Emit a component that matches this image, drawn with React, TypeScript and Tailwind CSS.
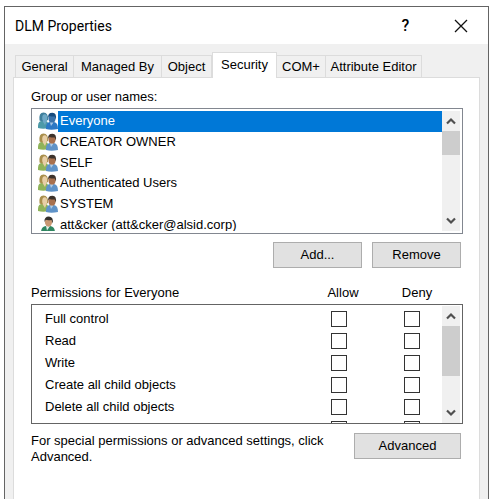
import type { ReactNode } from "react";

type Palette = { back: string; backHair: string; backSkin: string; front: string; hair: string; skin: string };

const normal: Palette = {
  back: "#8fb35a",
  backHair: "#a98f4c",
  backSkin: "#e8cfa6",
  front: "#5f93c8",
  hair: "#3d332c",
  skin: "#a8714f",
};

const selected: Palette = {
  back: "#4c9aa8",
  backHair: "#3f7f9c",
  backSkin: "#6fa9c6",
  front: "#2c78c4",
  hair: "#174b7e",
  skin: "#3a73ab",
};

function GroupIcon({ p }: { p: Palette }) {
  return (
    <svg viewBox="0 0 20 18" className="h-[18px] w-5 shrink-0" aria-hidden="true">
      <path d="M0 16 Q-0.500 9 4 9 H8 Q11 10 11 16 Q5 17.500 0 16Z" fill={p.back} />
      <path d="M1.500 8.500 Q0.500 0.500 5.500 0.500 Q10.500 0.500 10 8 L7 9.500 H4Z" fill={p.backHair} />
      <ellipse cx="6.700" cy="6" rx="2.500" ry="3.800" fill={p.backSkin} />
      <path d="M4.500 9 L7 13 L8.500 9Z" fill={p.backSkin} />
      <path d="M8 17 Q7.500 10.500 12 10 H16 Q20 10.500 20 17 Q13 18.500 8 17Z" fill={p.front} />
      <ellipse cx="14" cy="6.500" rx="3.600" ry="4.600" fill={p.skin} />
      <path d="M10.200 6 Q9.500 0.700 14.500 0.700 Q19 1 17.800 7.500 L16.800 4.500 Q13 4.500 11.300 4Z" fill={p.hair} />
      <path d="M12 10.500 L13 14 L15.500 10.500Z" fill="#d5e5f2" opacity="0.7" />
    </svg>
  );
}

function UserIcon() {
  return (
    <svg viewBox="0 0 20 18" className="h-[18px] w-5 shrink-0" aria-hidden="true">
      <path d="M3 16.500 Q3 10.500 8 10 H12 Q17 10.500 17 16.500 Q10 18.500 3 16.500Z" fill="#2f8560" />
      <path d="M8 10 L9 14.500 L12 10Z" fill="#e3efe8" />
      <ellipse cx="10.500" cy="6" rx="3.600" ry="4.700" fill="#c99873" />
      <path d="M6.500 6 Q6 0.500 11 0.500 Q16 1 14.500 7.500 L13.500 4 Q9.500 4.500 7.800 3.800Z" fill="#33302c" />
    </svg>
  );
}

function Chevron({ down }: { down?: boolean }) {
  return (
    <svg viewBox="0 0 10 8" className="h-2 w-[10px]" fill="none" stroke="#505050" strokeWidth="2.200" aria-hidden="true">
      <path d={down ? "M1 1.500 L5 5.500 L9 1.500" : "M1 6.500 L5 2.500 L9 6.500"} />
    </svg>
  );
}

function ScrollBar({ children }: { children: ReactNode }) {
  return (
    <div className="flex w-[18px] shrink-0 flex-col bg-[#f0f0f0]">
      <button type="button" aria-label="Scroll up" className="flex h-5 w-full shrink-0 items-center justify-center">
        <Chevron />
      </button>
      {children}
      <button type="button" aria-label="Scroll down" className="mt-auto flex h-5 w-full shrink-0 items-center justify-center">
        <Chevron down />
      </button>
    </div>
  );
}

function PushButton({ children, wide }: { children: ReactNode; wide?: boolean }) {
  return (
    <button
      type="button"
      className={`${wide ? "w-[107px]" : "w-[89px]"} h-[26px] shrink-0 border border-[#adadad] bg-[#e1e1e1] text-center`}
    >
      {children}
    </button>
  );
}

const tabs = [
  { name: "General", width: "w-[59px]" },
  { name: "Managed By", width: "w-[88px]" },
  { name: "Object", width: "w-[50px]" },
  { name: "Security", width: "w-[65px]" },
  { name: "COM+", width: "w-[49px]" },
  { name: "Attribute Editor", width: "w-[96px]" },
];

const principals = [
  "Everyone",
  "CREATOR OWNER",
  "SELF",
  "Authenticated Users",
  "SYSTEM",
  "att&cker (att&cker@alsid.corp)",
];

const permissions = ["Full control", "Read", "Write", "Create all child objects", "Delete all child objects", ""];

const box = "block size-4 appearance-none border border-[#333333] bg-white";

export default function App() {
  return (
    <div className="flex h-screen flex-col overflow-hidden bg-white pt-[6px] pr-[3px] pl-1 font-['Liberation_Sans',Arial,sans-serif] text-[13px] leading-4 text-black">
      <main className="flex min-h-0 flex-1 flex-col border-x border-t border-[#646464] bg-[#f0f0f0]">
        <header className="flex h-[37px] shrink-0 items-center bg-white pl-[10px] font-[Roboto,sans-serif]">
          <h1 className="flex-1 text-sm">DLM Properties</h1>
          <button type="button" aria-label="Help" className="w-[55px] text-center text-base font-medium">
            ?
          </button>
          <button type="button" aria-label="Close" className="flex w-[55px] justify-center">
            <svg viewBox="0 0 14 14" className="size-[14px]" stroke="#111" strokeWidth="1.300" aria-hidden="true">
              <path d="M1 1 L13 13 M13 1 L1 13" />
            </svg>
          </button>
        </header>

        <div className="flex min-h-0 flex-1 flex-col px-2 pt-2">
          <div role="tablist" className="relative flex h-[25px] shrink-0 items-end pl-[2px]">
            {tabs.map((t) =>
              t.name === "Security" ? (
                <button
                  key={t.name}
                  type="button"
                  role="tab"
                  aria-selected
                  className={`${t.width} -mb-px h-[26px] border-x border-t border-[#dcdcdc] bg-white pb-px text-center`}
                >
                  {t.name}
                </button>
              ) : (
                <button
                  key={t.name}
                  type="button"
                  role="tab"
                  aria-selected={false}
                  className={`${t.width} h-[22px] border-t border-r border-[#dcdcdc] text-center whitespace-nowrap first:border-l`}
                >
                  {t.name}
                </button>
              ),
            )}
          </div>

          <section className="flex flex-1 flex-col border-x border-t border-[#dcdcdc] bg-white pr-4 pl-[17px]">
            <h2 className="mt-[11px]">Group or user names:</h2>
            <div className="mt-[3px] flex h-[126px] border border-[#828790] p-[2px]">
              <div className="min-w-0 flex-1 overflow-hidden">
                <ul className="flex h-[124px] flex-col pl-1">
                  {principals.map((name, i) => (
                    <li key={name} className="flex flex-1 items-center">
                      {i === 5 ? <UserIcon /> : <GroupIcon p={i === 0 ? selected : normal} />}
                      <span
                        className={`flex h-full flex-1 items-center pl-[2px] ${i === 0 ? "bg-[#0078d7] text-white" : ""}`}
                      >
                        {name}
                      </span>
                    </li>
                  ))}
                </ul>
              </div>
              <ScrollBar>
                <div className="h-6 bg-[#cdcdcd]" />
              </ScrollBar>
            </div>

            <div className="mt-2 flex justify-end gap-[10px] pr-[2px]">
              <PushButton>Add...</PushButton>
              <PushButton>Remove</PushButton>
            </div>

            <div className="mt-[17px] flex">
              <h2 className="flex-1">Permissions for Everyone</h2>
              <span className="w-[74px] text-center">Allow</span>
              <span className="w-[74px] text-center">Deny</span>
              <span className="w-[9px]" />
            </div>
            <div className="mt-[3px] flex h-[120px] border border-[#646464] pt-px pr-[2px]">
              <div className="min-w-0 flex-1 overflow-hidden pt-[2px]">
                <table className="w-full border-collapse">
                  <tbody>
                    {permissions.map((name, i) => (
                      <tr key={i} className="h-[22px]">
                        <th scope="row" className="p-0 pl-[13px] text-left font-normal">
                          {name}
                        </th>
                        <td className="w-[73px] p-0">
                          <input type="checkbox" aria-label={`Allow ${name}`} className={box} />
                        </td>
                        <td className="w-[38px] p-0">
                          <input type="checkbox" aria-label={`Deny ${name}`} className={box} />
                        </td>
                      </tr>
                    ))}
                  </tbody>
                </table>
              </div>
              <ScrollBar>
                <div className="h-[50px] bg-[#cdcdcd]" />
              </ScrollBar>
            </div>

            <div className="mt-[9px] flex justify-between pr-[2px]">
              <p className="max-w-[300px]">For special permissions or advanced settings, click Advanced.</p>
              <PushButton wide>Advanced</PushButton>
            </div>
          </section>
        </div>
      </main>
    </div>
  );
}
